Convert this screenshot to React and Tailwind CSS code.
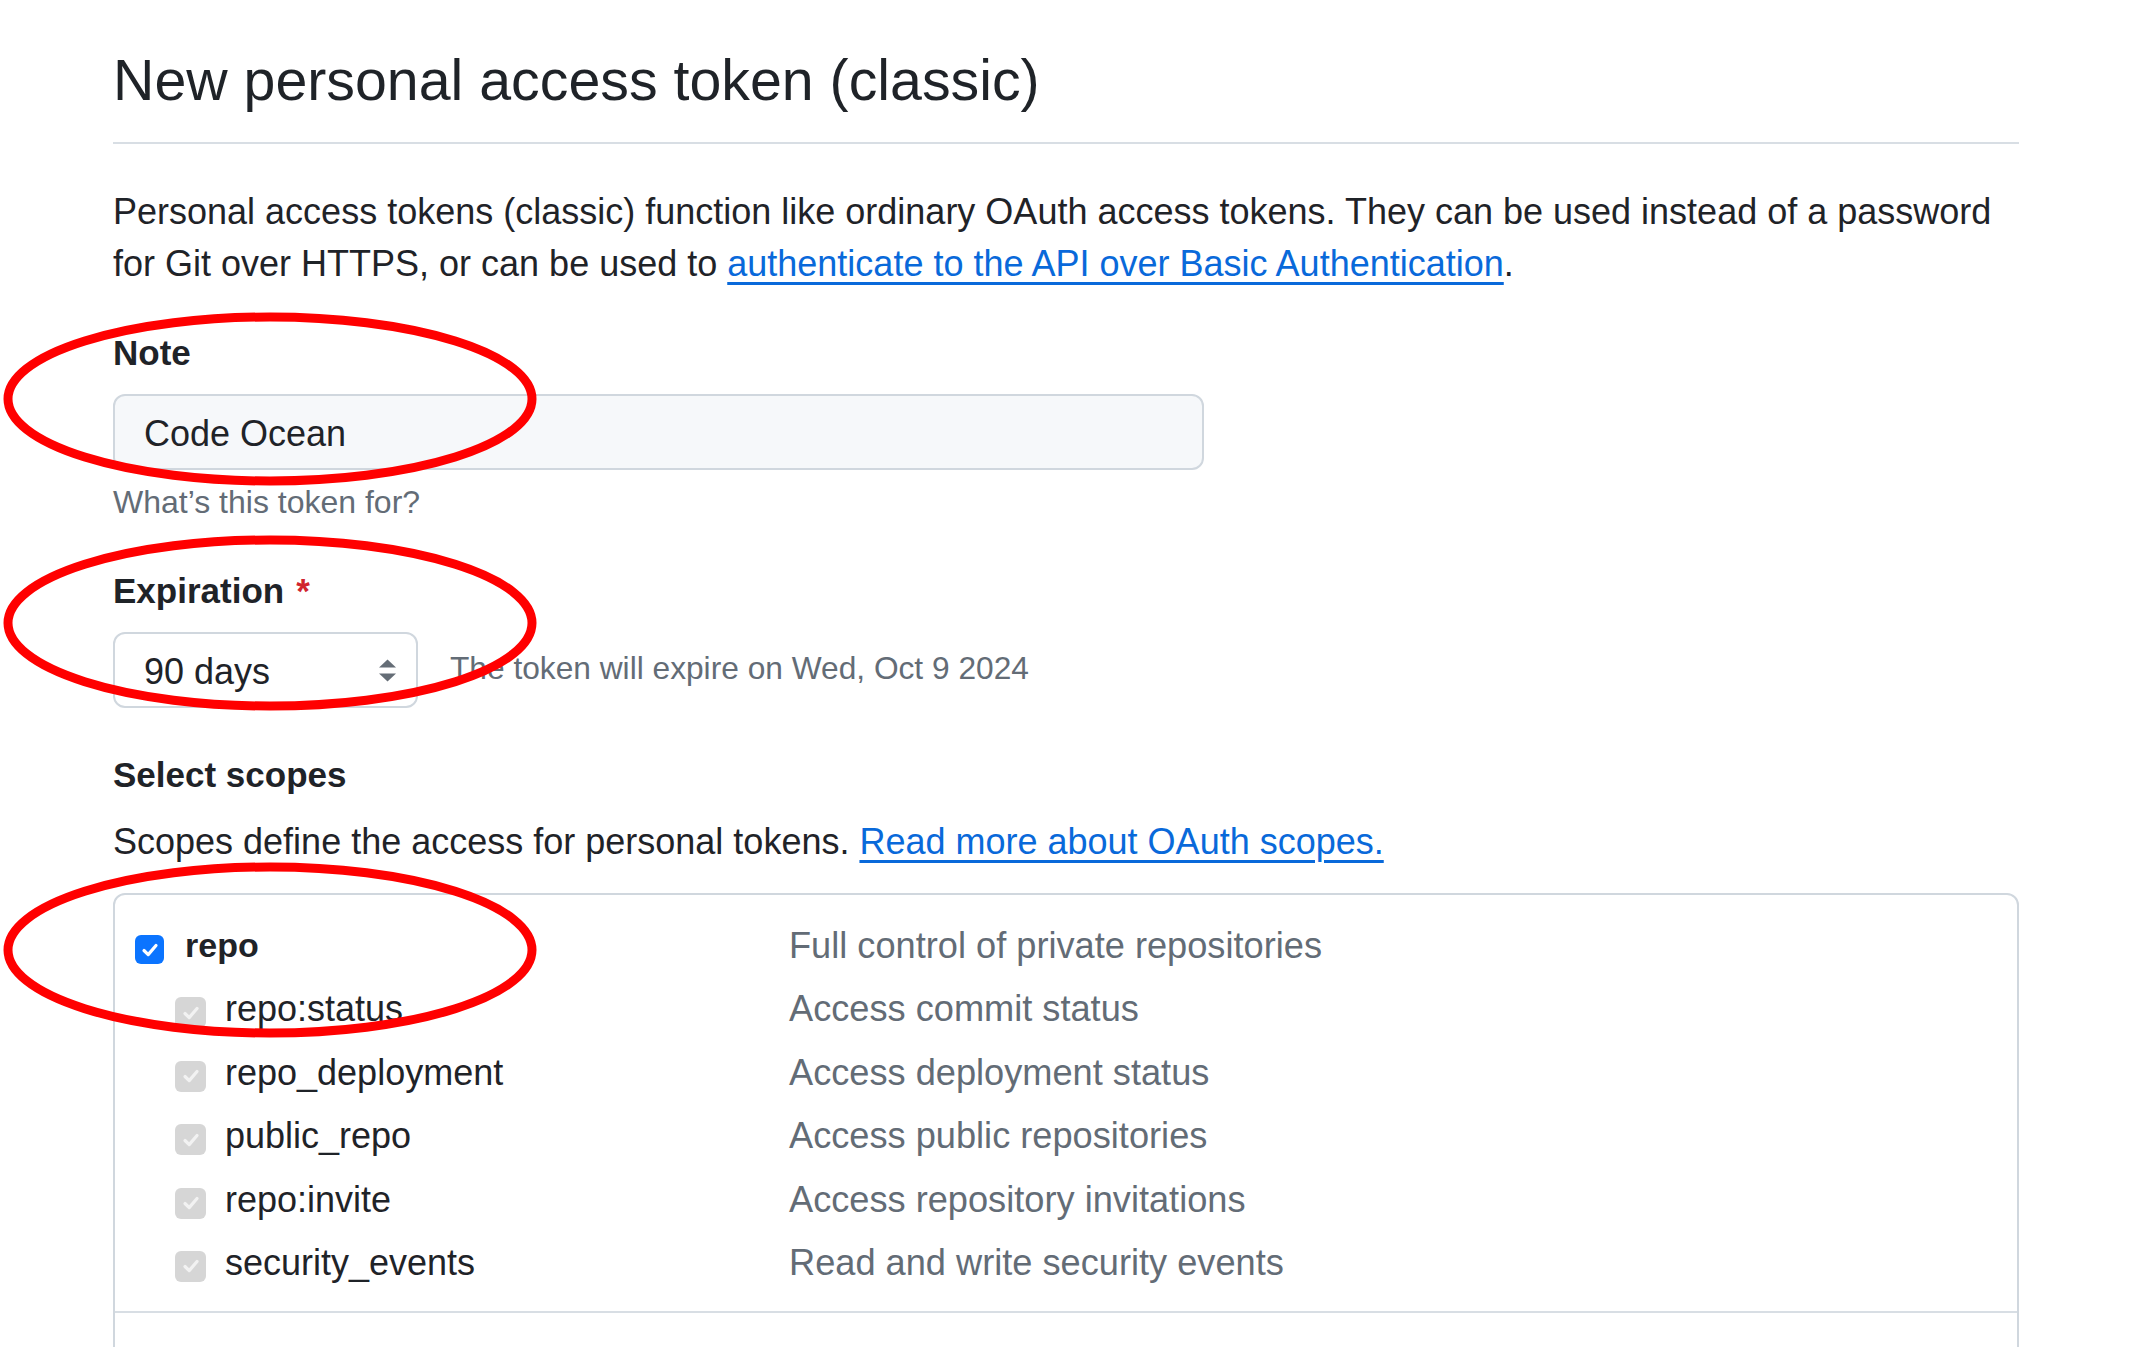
import React from "react";

const scopes = [
  { name: "repo", desc: "Full control of private repositories", parent: true },
  { name: "repo:status", desc: "Access commit status" },
  { name: "repo_deployment", desc: "Access deployment status" },
  { name: "public_repo", desc: "Access public repositories" },
  { name: "repo:invite", desc: "Access repository invitations" },
  { name: "security_events", desc: "Read and write security events" },
];

function Check({ on }) {
  return (
    <div
      className={
        on
          ? "mt-[21px] w-[29px] h-[29px] rounded-[6px] bg-[#0b74ff] flex items-center justify-center shrink-0"
          : "mt-[20px] w-[31px] h-[31px] rounded-[6px] bg-[#d6d6d6] flex items-center justify-center shrink-0"
      }
    >
      <svg width="20" height="20" viewBox="0 0 20 20">
        <path
          d="M4 10.5 L8.2 14.6 L16 5.5"
          fill="none"
          stroke={on ? "#ffffff" : "#f2f2f2"}
          strokeWidth="3.2"
          strokeLinecap="round"
          strokeLinejoin="round"
        />
      </svg>
    </div>
  );
}

export default function App() {
  return (
    <div
      className="relative w-full h-[1347px] overflow-hidden bg-white text-[#1f2328]"
      style={{ fontFamily: '"Liberation Sans", Arial, sans-serif' }}
    >
      <div className="pl-[113px] pt-[45px] w-[2019px]">
        {/* Header */}
        <h1 className="text-[57.3px] leading-[71px] font-normal">New personal access token (classic)</h1>
        <div className="mt-[26px] h-[2px] bg-[#d8dee4]" />

        <p className="mt-[42px] text-[36px] leading-[52px]">
          <span>Personal access tokens (classic) function like ordinary OAuth access tokens. They can be used instead of a password</span>
          <br />
          <span>for Git over HTTPS, or can be used to </span>
          <a className="text-[#0969da] underline decoration-[3px] underline-offset-[6px]">authenticate to the API over Basic Authentication</a>
          <span>.</span>
        </p>

        {/* Note */}
        <div className="mt-[39px] text-[35px] leading-[48px] font-bold">Note</div>
        <div className="mt-[17px] w-[1091px] h-[76px] rounded-[12px] border-2 border-[#d0d7de] bg-[#f6f8fa] flex items-center pl-[29px] pt-[3px] text-[36px]">
          Code Ocean
        </div>
        <div className="mt-[10px] text-[32px] leading-[44px] text-[#636c76]">What’s this token for?</div>

        {/* Expiration */}
        <div className="mt-[43px] text-[35px] leading-[48px] font-bold">
          Expiration<span className="ml-[12px] text-[#d1242f]">*</span>
        </div>
        <div className="mt-[17px] flex items-center">
          <div className="w-[305px] h-[76px] rounded-[12px] border-2 border-[#d0d7de] bg-white flex items-center justify-between pl-[29px] pr-[19px] text-[36px]">
            <span className="pt-[3px]">90 days</span>
            <svg width="19" height="23" viewBox="0 0 19 23">
              <path d="M1 8.5 L9.5 0.5 L18 8.5 Z" fill="#656d76" />
              <path d="M1 14.5 L9.5 22.5 L18 14.5 Z" fill="#656d76" />
            </svg>
          </div>
          <span className="ml-[32px] text-[31.7px] text-[#636c76] -translate-y-[1px]">The token will expire on Wed, Oct 9 2024</span>
        </div>

        {/* Scopes */}
        <div className="mt-[43px] text-[35px] leading-[48px] font-bold">Select scopes</div>
        <p className="mt-[17px] text-[36px] leading-[52px]">
          <span>Scopes define the access for personal tokens. </span>
          <a className="text-[#0969da] underline decoration-[3px] underline-offset-[6px]">Read more about OAuth scopes.</a>
        </p>

        <div className="mt-[25px] rounded-t-[12px] border-2 border-[#d0d7de]">
          <div className="pt-[19px] pb-[17px]">
            {scopes.map((s) => (
              <div key={s.name} className="grid grid-cols-[674px_1fr] h-[63.4px]">
                <div className={s.parent ? "flex items-start pl-[20px] gap-[21px]" : "flex items-start pl-[60px] gap-[19px]"}>
                  <Check on={s.parent} />
                  <span className={s.parent ? "text-[34px] font-bold leading-[63.4px]" : "text-[36px] leading-[63.4px]"}>
                    {s.name}
                  </span>
                </div>
                <span className="text-[36.2px] leading-[63.4px] text-[#636c76]">{s.desc}</span>
              </div>
            ))}
          </div>
          <div className="border-t-2 border-[#d8dee4] h-[120px]" />
        </div>
      </div>

      {/* Red annotation marks */}
      <svg className="absolute inset-0 pointer-events-none" width="2149" height="1347">
        <ellipse cx="270" cy="399" rx="262" ry="82" fill="none" stroke="#ff0000" strokeWidth="9" />
        <ellipse cx="270" cy="623" rx="262" ry="83" fill="none" stroke="#ff0000" strokeWidth="9" />
        <ellipse cx="270" cy="950" rx="262" ry="83" fill="none" stroke="#ff0000" strokeWidth="9" />
      </svg>
    </div>
  );
}
